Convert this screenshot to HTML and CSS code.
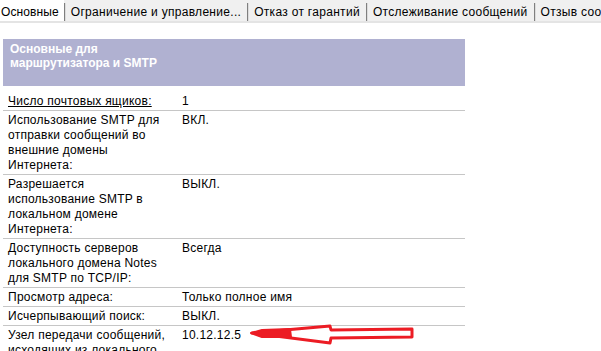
FILE: index.html
```html
<!DOCTYPE html>
<html lang="ru">
<head>
<meta charset="utf-8">
<title>Основные</title>
<link rel="stylesheet" href="styles.css">
</head>
<body>
<div class="tabs">
  <div class="tab active">Основные</div>
  <div class="tab">Ограничение и управление...</div>
  <div class="tab">Отказ от гарантий</div>
  <div class="tab">Отслеживание сообщений</div>
  <div class="tab">Отзыв сообщений</div>
</div>
<div class="content">
  <div class="section-head"><div class="section-title">Основные для маршрутизатора и SMTP</div></div>
  <div class="table">
    <div class="row"><div class="label"><span class="ul">Число почтовых ящиков:</span></div><div class="value">1</div></div>
    <div class="row"><div class="label">Использование SMTP для отправки сообщений во внешние домены Интернета:</div><div class="value">ВКЛ.</div></div>
    <div class="row"><div class="label">Разрешается использование SMTP в локальном домене Интернета:</div><div class="value">ВЫКЛ.</div></div>
    <div class="row"><div class="label">Доступность серверов локального домена Notes для SMTP по TCP/IP:</div><div class="value">Всегда</div></div>
    <div class="row"><div class="label">Просмотр адреса:</div><div class="value">Только полное имя</div></div>
    <div class="row"><div class="label">Исчерпывающий поиск:</div><div class="value">ВЫКЛ.</div></div>
    <div class="row"><div class="label">Узел передачи сообщений, исходящих из локального домена Интернета:</div><div class="value">10.12.12.5</div></div>
  </div>
</div>
<svg class="arrow" width="601" height="351" viewBox="0 0 601 351" aria-hidden="true">
  <path d="M252 333 L330 326 L331 330 L412 329 L412 337 L331 338 L330 343 Z" fill="none" stroke="#ec1c24" stroke-width="3" stroke-linejoin="round"/>
  <path d="M251 333 L262 330 L290 329 L291 337 L262 337 Z" fill="#ec1c24" stroke="#ec1c24" stroke-width="2" stroke-linejoin="round"/>
</svg>
</body>
</html>
```
FILE: styles.css
```css
html, body {
  margin: 0;
  padding: 0;
  overflow: hidden;
  background: #ffffff;
  width: 601px;
  height: 351px;
}
body {
  font-family: "Liberation Sans", Arial, sans-serif;
  font-size: 12px;
  color: #000;
  position: relative;
}
.tabs {
  display: flex;
  height: 21px;
  background: #f0f0f0;
  border-bottom: 2px solid #e4e4e4;
  white-space: nowrap;
  overflow: hidden;
}
.tab {
  margin-top: 3px;
  height: 16px;
  padding: 2px 6px 0 6px;
  line-height: 15px;
  letter-spacing: 0.3px;
  border-left: 1px solid #7f7f7f;
  box-shadow: inset 1px 0 0 #dcdcdc;
  color: #000;
}
.tab.active {
  margin-top: 0;
  height: 16px;
  padding: 5px 5px 0 1px;
  background: #ffffff;
  border-left: none;
  box-shadow: none;
  width: 58px;
  letter-spacing: 0.1px;
}
.content {
  padding: 16px 0 0 3px;
}
.section-head {
  width: 455px;
  height: 44px;
  background: #b0b1d1;
  padding: 3px 0 0 7px;
}
.section-title {
  width: 180px;
  color: #ffffff;
  font-weight: bold;
  line-height: 14px;
}
.table {
  margin-top: 6px;
  width: 462px;
  letter-spacing: 0.25px;
}
.row {
  display: grid;
  grid-template-columns: 179px 1fr;
  border-bottom: 1px solid #c6c6c6;
  padding: 2px 0 1px 0;
  line-height: 15px;
}
.label {
  padding: 0 11px 0 5px;
}
.ul {
  text-decoration: underline;
}
.arrow {
  position: absolute;
  left: 0;
  top: 0;
  pointer-events: none;
}
```
